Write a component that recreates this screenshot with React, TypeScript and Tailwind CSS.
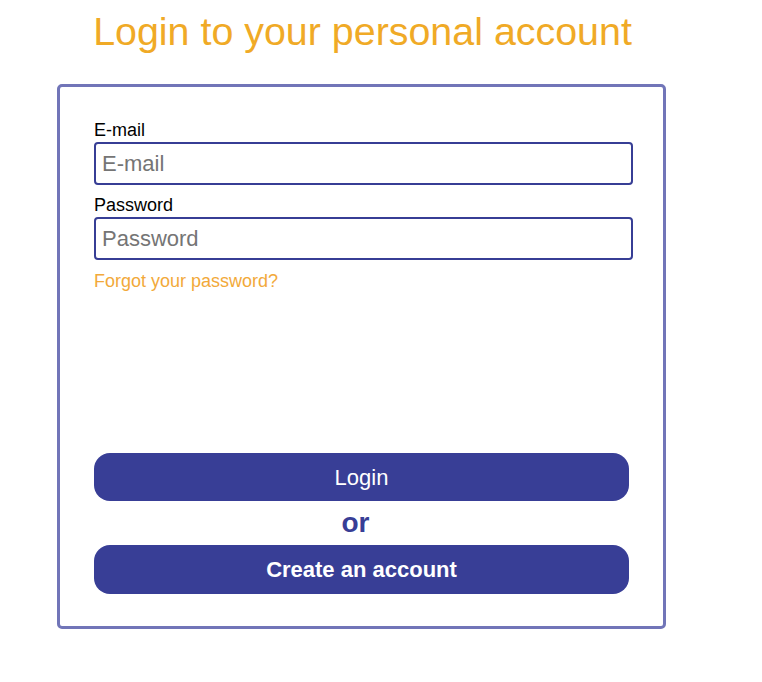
export default function App() {
  return (
    <div className="w-[762px] min-h-[682px] bg-white font-['Liberation_Sans',Arial,sans-serif]">
      <div className="ml-[57px] w-[609px]">
        <h1 className="pt-[8px] pl-[2px] text-center text-[39.4px] leading-[46px] font-normal text-[#f0aa26]">
          Login to your personal account
        </h1>

        {/* Login card */}
        <form
          className="mt-[30px] flex flex-col rounded-[5px] border-[3px] border-[#7175b8] pl-[34px] pt-[33px] pb-[32px]"
          onSubmit={(e) => e.preventDefault()}
        >
          <label className="block text-[18px] leading-[20px] text-black">E-mail</label>
          <input
            type="email"
            placeholder="E-mail"
            className="mt-[2px] h-[43px] w-[539px] rounded-[4px] border-2 border-[#373e95] px-[6px] text-[22px] text-black placeholder:text-[#757575] outline-none"
          />

          <label className="mt-[10px] block text-[18px] leading-[20px] text-black">Password</label>
          <input
            type="password"
            placeholder="Password"
            className="mt-[2px] h-[43px] w-[539px] rounded-[4px] border-2 border-[#373e95] px-[6px] text-[22px] text-black placeholder:text-[#757575] outline-none"
          />

          <a href="#" className="mt-[11px] block w-fit text-[18px] leading-[20px] text-[#f2a93a]">
            Forgot your password?
          </a>

          <div className="h-[162px]" />

          <button
            type="submit"
            className="flex h-[48px] w-[535px] items-center justify-center rounded-[16px] bg-[#383e96] text-[22px] text-white"
          >
            Login
          </button>
          <p className="mt-[7px] w-[523px] text-center text-[28px] leading-[30px] font-bold text-[#383e96]">or</p>
          <button
            type="button"
            className="mt-[7px] flex h-[49px] w-[535px] items-center justify-center rounded-[16px] bg-[#383e96] text-[22px] font-bold text-white"
          >
            Create an account
          </button>
        </form>
      </div>
    </div>
  );
}
